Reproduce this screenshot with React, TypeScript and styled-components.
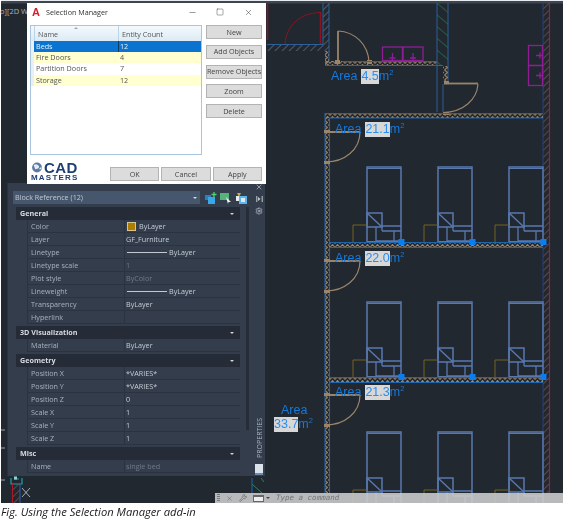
import React from "react";
import styled, { createGlobalStyle } from "styled-components";
import { Minus, Square, X, Wrench, Settings } from "lucide-react";

const Global = createGlobalStyle`
  html, body { margin: 0; padding: 0; background: #fff; }
  body { font-family: "Open Sans", "Liberation Sans", sans-serif; }
`;

const Page = styled.div`
  width: 565px;
  height: 524px;
  background: #fff;
  overflow: hidden;
`;

const Canvas = styled.div`
  position: relative;
  width: 563px;
  height: 503px;
  background: #212830;
  overflow: hidden;
`;

const Drawing = styled.svg`
  display: block;
  width: 563px;
  height: 503px;
  filter: blur(0.35px);
`;

const Caption = styled.div`
  padding: 2px 0 0 1px;
  font: italic 11.2px/14px "Open Sans", sans-serif;
  color: #1a1a1a;
  filter: blur(0.2px);
`;

const ViewLabel = styled.div`
  position: absolute;
  left: 0;
  top: 6px;
  font: 7.5px/11px "Open Sans", sans-serif;
  color: #aab2bc;
  white-space: nowrap;
`;

const Area = styled.div<{ $x: number; $y: number }>`
  position: absolute;
  left: ${p => p.$x}px;
  top: ${p => p.$y}px;
  display: flex;
  align-items: center;
  height: 15px;
  font: 12.5px/15px "Liberation Sans", Arial, sans-serif;
  color: #1679dc;
  white-space: nowrap;
  filter: blur(0.3px);
`;
const AreaWord = styled.span`
  margin-right: 4px;
`;
const AreaValue = styled.span`
  background: #d8d8d8;
  color: #2a8df2;
  line-height: 15px;
`;
const Sup = styled.span`
  font-size: 7.5px;
  line-height: 8px;
  margin-top: -7px;
`;

/* dialog */
const Dialog = styled.div`
  position: absolute;
  left: 27px;
  top: 3px;
  width: 239px;
  height: 181px;
  background: #fff;
  display: flex;
  flex-direction: column;
  box-sizing: border-box;
  padding: 0 4px 3px 3px;
  font: 7.2px/11px "Open Sans", sans-serif;
  color: #333;
  filter: blur(0.3px);
`;
const TitleBar = styled.div`
  display: flex;
  align-items: center;
  height: 22px;
  padding-bottom: 4px;
  box-sizing: border-box;
  flex: none;
`;
const AppGlyph = styled.span`
  width: 9px;
  margin-left: 2px;
  font: bold 11px/11px "Liberation Sans", sans-serif;
  color: #d8202a;
`;
const TitleText = styled.span`
  margin-left: 5px;
  flex: 1;
  font-size: 7.2px;
  color: #333;
`;
const WinButton = styled.span`
  width: 28px;
  display: flex;
  justify-content: center;
  color: #222;
`;
const DialogBody = styled.div`
  display: flex;
  gap: 4px;
  height: 130px;
  flex: none;
`;
const ListBox = styled.div`
  width: 172px;
  height: 130px;
  box-sizing: border-box;
  border: 1px solid #a9c6de;
  background: #fff;
`;
const ListHeader = styled.div`
  position: relative;
  display: grid;
  grid-template-columns: 3px 84px 1fr;
  height: 15px;
  background: linear-gradient(#f4f9fc, #dcebf5);
  &::after {
    content: "";
    position: absolute;
    left: 43px;
    top: 1px;
    border-left: 2px solid transparent;
    border-right: 2px solid transparent;
    border-bottom: 2px solid #9aa7b3;
  }
`;
const HeadCell = styled.div`
  display: flex;
  align-items: center;
  padding: 2px 0 0 3px;
  border-left: 1px solid #b8d4e8;
  color: #555;
`;
const ListRow = styled.div<{ $selected?: boolean; $alt?: boolean }>`
  display: grid;
  grid-template-columns: 3px 84px 1fr;
  height: 11.2px;
  line-height: 11px;
  color: ${p => (p.$selected ? "#e6f2fc" : "#555")};
  background: ${p => (p.$selected ? "#0a74d0" : p.$alt ? "#ffffcf" : "#fff")};
`;
const Gutter = styled.div`
  background: #e8f0f6;
`;
const Cell = styled.div<{ $selected?: boolean }>`
  padding-left: 1px;
  border-left: 1px solid ${p => (p.$selected ? "#0a3a66" : "transparent")};
`;
const Side = styled.div`
  display: flex;
  flex-direction: column;
  gap: 5.8px;
`;
const Btn = styled.div<{ $w: number }>`
  width: ${p => p.$w}px;
  height: 14px;
  box-sizing: border-box;
  display: flex;
  align-items: center;
  justify-content: center;
  background: #dcdcdc;
  border: 1px solid #b3b3b3;
  color: #444;
  white-space: nowrap;
`;
const Footer = styled.div`
  display: flex;
  align-items: flex-end;
  margin-top: auto;
  gap: 2px;
`;
const Logo = styled.div`
  width: 76px;
  margin: 0 2px 0 1px;
  display: flex;
  flex-direction: column;
  gap: 1px;
  color: #1f3f73;
`;
const LogoTop = styled.div`
  display: flex;
  align-items: center;
  gap: 1px;
  height: 11px;
`;
const LogoCad = styled.span`
  font: bold 15px/11px "Liberation Sans", sans-serif;
  letter-spacing: 0.4px;
`;
const LogoMasters = styled.span`
  font: bold 8px/7px "Liberation Sans", sans-serif;
  letter-spacing: 1.2px;
`;

/* properties palette */
const Palette = styled.div`
  position: absolute;
  left: 7px;
  top: 183px;
  width: 258px;
  height: 293px;
  display: flex;
  background: #333d4c;
  box-sizing: border-box;
  border-left: 1px solid #2a323e;
  font: 7.2px/13px "Open Sans", sans-serif;
  color: #a9b2be;
  filter: blur(0.3px);
`;
const PaletteMain = styled.div`
  flex: 1;
  padding: 8px 0 0 5px;
  min-width: 0;
`;
const SelectRow = styled.div`
  display: flex;
  align-items: center;
  height: 13px;
`;
const SelectBox = styled.div`
  width: 187px;
  height: 13px;
  display: flex;
  align-items: center;
  justify-content: space-between;
  box-sizing: border-box;
  padding: 0 2px;
  background: #46566c;
  color: #c2cad4;
  &::after {
    content: "";
    margin-right: 1px;
    border-left: 2px solid transparent;
    border-right: 2px solid transparent;
    border-top: 2px solid #d5dbe2;
  }
`;
const SelectIcons = styled.div`
  display: flex;
  gap: 3px;
  margin-left: 5px;
`;
const ScrollWrap = styled.div`
  display: flex;
  margin-top: 3px;
  margin-left: 3px;
`;
const Sections = styled.div`
  width: 224px;
  display: flex;
  flex-direction: column;
  gap: 2px;
`;
const Scroll = styled.div`
  width: 3px;
  height: 223px;
  margin-left: 6px;
  background: #262d38;
`;
const SectionHead = styled.div`
  height: 13px;
  display: flex;
  align-items: center;
  justify-content: space-between;
  padding: 0 6px 0 4px;
  background: #252c37;
  color: #d5dae0;
  font-weight: 700;
  &::after {
    content: "";
    border-left: 2.5px solid transparent;
    border-right: 2.5px solid transparent;
    border-top: 2.5px solid #cfd4da;
  }
`;
const PropRow = styled.div`
  display: grid;
  grid-template-columns: 97px 1fr;
  height: 13px;
  margin-left: 11px;
  box-sizing: border-box;
  border-bottom: 1px solid #2b3340;
  border-left: 1px solid #2b3340;
  line-height: 12px;
`;
const PropName = styled.div`
  padding-left: 3px;
  border-right: 1px solid #2b3340;
`;
const PropValue = styled.div<{ $muted?: boolean }>`
  padding-left: 1px;
  display: flex;
  align-items: center;
  color: ${p => (p.$muted ? "#6f7986" : "#c5ccd5")};
  white-space: nowrap;
`;
const Swatch = styled.span`
  width: 9px;
  height: 9px;
  box-sizing: border-box;
  margin: 0 3px 0 1px;
  background: #b07c00;
  border: 1px solid #d8c78a;
`;
const LineSample = styled.span`
  width: 40px;
  height: 1px;
  margin: 0 2px 0 1px;
  background: #c3c9d1;
`;
const SideStrip = styled.div`
  width: 12px;
  flex: none;
  display: flex;
  flex-direction: column;
  align-items: center;
  height: 100%;
  color: #c3c9d1;
  gap: 4px;
`;
const Vertical = styled.div`
  margin-top: auto;
  writing-mode: vertical-rl;
  transform: rotate(180deg);
  font-size: 7px;
  line-height: 11px;
  color: #aab2bd;
`;
const SideGlyph = styled.div`
  width: 8px;
  height: 9px;
  margin: 2px 0 1px;
  background: #dbe3ea;
  border-bottom: 2px solid #6f8aa8;
`;

/* command line */
const CommandBar = styled.div`
  position: absolute;
  left: 215px;
  top: 493px;
  width: 348px;
  height: 10px;
  display: flex;
  align-items: center;
  gap: 6px;
  background: rgba(205, 205, 205, 0.88);
  color: #555;
  filter: blur(0.3px);
`;
const Grip = styled.span`
  width: 3px;
  height: 8px;
  margin-left: 2px;
  background: repeating-linear-gradient(#777 0 1px, transparent 1px 2px);
`;
const Prompt = styled.span`
  font: italic 7.5px/10px "DejaVu Sans Mono", monospace;
  color: #777;
  margin-left: 0;
  white-space: nowrap;
`;
const TermIcon = styled.span`
  width: 11px;
  height: 7px;
  box-sizing: border-box;
  border: 1px solid #666;
  border-top-width: 2px;
  background: #eee;
`;
const Caret = styled.span`
  border-left: 2px solid transparent;
  border-right: 2px solid transparent;
  border-top: 2px solid #444;
  margin-left: -4px;
`;

const WALL = "#1f66ad";
const BED = "#5878ae";
const TAN = "#9a846a";

function Bed({ x, y }: { x: number; y: number }) {
  const b = y + 75;
  return (
    <g fill="none" stroke={BED} strokeWidth="1.5">
      <path d={`M${x} ${b}V${y}H${x + 34}V${b}`} />
      <path d={`M${x} ${y + 1.5}H${x + 34}`} strokeWidth="1.2" />
      <rect x={x} y={y + 46} width="15" height="14" />
      <path d={`M${x} ${y + 46}L${x + 15} ${y + 60}`} />
      <path d={`M${x + 9} ${y + 60}V${y + 74}H${x + 34}M${x + 15} ${y + 59}H${x + 34}M${x + 15} ${y + 64}H${x + 34}M${x + 27} ${y + 64}V${y + 74}M${x + 15} ${y + 64}V${y + 60}`} strokeWidth="1.3" />
      <path d={`M${x} ${b}H${x + 34}`} strokeWidth="1.8" />
      <path d={`M${x - 14} ${b}V${y + 58}H${x}`} stroke="#75631f" strokeWidth="1" />
    </g>
  );
}

function Door({ y }: { y: number }) {
  return (
    <g fill="none" stroke={TAN}>
      <path d={`M326 ${y}H360`} strokeWidth="1.8" />
      <path d={`M360 ${y}C360 ${y + 18} 344 ${y + 30} 326 ${y + 30}`} strokeWidth="1.2" />
      <rect x="324" y={y - 2} width="6" height="3" fill={TAN} stroke="none" />
      <rect x="324" y={y + 29} width="6" height="3" fill={TAN} stroke="none" />
    </g>
  );
}

function HWall({ x1, x2, y }: { x1: number; x2: number; y: number }) {
  return (
    <g>
      <rect x={x1} y={y} width={x2 - x1} height="4" fill="url(#zigH)" />
      <path d={`M${x1} ${y + 4.5}H${x2}`} stroke={WALL} strokeWidth="1" />
    </g>
  );
}

function VWall({ y1, y2 }: { y1: number; y2: number }) {
  return <rect x="325" y={y1} width="4" height={y2 - y1} fill="url(#zigV)" />;
}

function Sink({ x, y }: { x: number; y: number }) {
  return (
    <g fill="none" stroke="#8f1d96" strokeWidth="1.3">
      <rect x={x} y={y} width="20" height="13.5" />
      <path d={`M${x + 10} ${y + 6}V${y + 13}M${x + 7} ${y + 11}H${x + 13}`} />
    </g>
  );
}

function SinkV({ y }: { y: number }) {
  return (
    <g fill="none" stroke="#8f1d96" strokeWidth="1.3">
      <rect x="528.5" y={y} width="14" height="20" />
      <path d={`M536 ${y + 10}H542M540 ${y + 7}V${y + 13}`} />
    </g>
  );
}

function Plan() {
  return (
    <Drawing viewBox="0 0 563 503" aria-hidden="true">
      <defs>
        <pattern id="hatch" width="5" height="5" patternUnits="userSpaceOnUse" patternTransform="rotate(-45)">
          <path d="M0 0H5" stroke="#78808c" strokeWidth="1.1" />
        </pattern>
        <pattern id="hatchRed" width="5" height="5" patternUnits="userSpaceOnUse" patternTransform="rotate(-45)">
          <path d="M0 0H5" stroke="#8a5f66" strokeWidth="1.1" />
        </pattern>
        <pattern id="hatchGreen" width="9" height="9" patternUnits="userSpaceOnUse" patternTransform="rotate(40)">
          <path d="M0 0H9" stroke="#1f8a55" strokeWidth="1.1" />
        </pattern>
        <pattern id="zigH" width="5" height="4" patternUnits="userSpaceOnUse">
          <path d="M0 3.5L2.5 .5L5 3.5" fill="none" stroke={TAN} strokeWidth="1.1" />
        </pattern>
        <pattern id="zigV" width="4" height="5" patternUnits="userSpaceOnUse">
          <path d="M.5 0L3.5 2.5L.5 5" fill="none" stroke={TAN} strokeWidth="1.1" />
        </pattern>
      </defs>
      <rect width="563" height="503" fill="#212830" />
      <rect width="563" height="1" fill="#e9ebee" />
      <rect y="1" width="563" height="2.5" fill="#3c4653" />
      <rect y="0" width="1" height="503" fill="#fff" />

      {/* upper left room */}
      <rect x="323" y="3" width="6" height="42" fill="url(#hatch)" />
      <path d="M323 3V44M329 3V52" stroke="#2c5f9c" />
      <rect x="267" y="45" width="62" height="6" fill="url(#hatch)" />
      <path d="M267 44.5H323" stroke="#2c5f9c" />
      <path d="M285 44C286 26 300 13 320 12.5" fill="none" stroke="#8a1420" strokeWidth="1" />
      <path d="M320.5 12V44" stroke="#8a1420" strokeWidth="1.6" />
      <path d="M267.5 4V40" stroke="#8a1420" strokeWidth="1.5" />

      {/* small room */}
      <path d="M338 31V62" stroke={TAN} strokeWidth="1.8" />
      <path d="M338 31C355 32 368 44 369 62" fill="none" stroke={TAN} strokeWidth="1.2" />
      <rect x="335" y="60" width="5" height="4" fill={TAN} />
      <rect x="367" y="60" width="5" height="4" fill={TAN} />
      <rect x="325" y="61" width="112" height="4" fill="url(#zigH)" />
      <path d="M325 65.5H443M329 51V61M342 61.5H437" stroke={WALL} />
      <VWall y1={51} y2={65} />
      <Sink x={382.5} y={47} />
      <Sink x={403} y={47} />

      {/* green wall */}
      <rect x="437" y="3" width="11" height="62" fill="url(#hatchGreen)" />
      <path d="M437 3V112M448 3V84M443 84V112" stroke="#2c5f9c" />
      <rect x="443" y="66" width="5" height="16" fill="url(#zigV)" />
      <path d="M449 83.5H478" stroke={TAN} strokeWidth="1.8" />
      <path d="M478 84C477 99 464 112 443 112.5" fill="none" stroke={TAN} strokeWidth="1.2" />
      <rect x="444" y="81" width="5" height="3.5" fill={TAN} />
      <rect x="443" y="112" width="6" height="3" fill={TAN} />

      {/* right wall */}
      <rect x="543" y="3" width="6" height="490" fill="url(#hatchRed)" />
      <path d="M543 3V493" stroke="#2a3f78" />
      <path d="M549.5 3V493" stroke="#a81c28" strokeWidth="1.2" />
      <SinkV y={45.5} />
      <SinkV y={65.5} />

      {/* corridors */}
      <rect x="325" y="114" width="218" height="4" fill="url(#zigH)" />
      <path d="M325 113.5H543M329 118H543" stroke={WALL} />
      <VWall y1={118} y2={493} />
      <path d="M325 113V493M329.5 118V493" stroke={WALL} strokeWidth="1.1" />

      <Door y={132} />
      <Door y={261} />
      <Door y={395} />

      {[167, 302, 432].map(y =>
        [367, 438, 509].map(x => <Bed key={`${x}-${y}`} x={x} y={y} />)
      )}

      <HWall x1={329} x2={543} y={243} />
      <HWall x1={329} x2={543} y={378} />
      <path d="M329 242.5H543M329 377.5H543" stroke={WALL} />

      {[242, 377].map(y =>
        [401, 472, 543].map(x => (
          <rect key={`${x}-${y}`} x={x - 2.5} y={y - 3} width="6" height="6" fill="#0a7df0" />
        ))
      )}

      {/* lower left */}
      <path d="M11 478V484H22V478M14 479H19" fill="none" stroke="#1aa3a8" strokeWidth="1.2" />
      <rect x="14" y="476.5" width="3" height="3" fill="#8fd3d6" />
      <rect x="12" y="484" width="8" height="20" fill="url(#hatchRed)" />
      <path d="M12.5 484V503" stroke="#a81c28" />
      <path d="M20 484V503" stroke="#2a5fb0" />
      <path d="M22 488L30 497M30 488L22 497" stroke="#c9ced4" strokeWidth="0.8" />
      <path d="M1 430H5M1 448H5M1 480H5" stroke="#9aa2ab" />
      <path d="M252 478V493" stroke="#2a5fb0" />
      <path d="M252 484L262 493M261 478L264 482" stroke="#1f8a55" />
    </Drawing>
  );
}

type Prop = { name: string; value?: string; muted?: boolean; kind?: "swatch" | "line" };
const sections: { title: string; rows: Prop[] }[] = [
  {
    title: "General",
    rows: [
      { name: "Color", value: "ByLayer", kind: "swatch" },
      { name: "Layer", value: "GF_Furniture" },
      { name: "Linetype", value: "ByLayer", kind: "line" },
      { name: "Linetype scale", value: "1", muted: true },
      { name: "Plot style", value: "ByColor", muted: true },
      { name: "Lineweight", value: "ByLayer", kind: "line" },
      { name: "Transparency", value: "ByLayer" },
      { name: "Hyperlink" },
    ],
  },
  { title: "3D Visualization", rows: [{ name: "Material", value: "ByLayer" }] },
  {
    title: "Geometry",
    rows: [
      { name: "Position X", value: "*VARIES*" },
      { name: "Position Y", value: "*VARIES*" },
      { name: "Position Z", value: "0" },
      { name: "Scale X", value: "1" },
      { name: "Scale Y", value: "1" },
      { name: "Scale Z", value: "1" },
    ],
  },
  { title: "Misc", rows: [{ name: "Name", value: "single bed", muted: true }] },
];

const listRows = [
  { name: "Beds", count: "12", selected: true },
  { name: "Fire Doors", count: "4", alt: true },
  { name: "Partition Doors", count: "7" },
  { name: "Storage", count: "12", alt: true },
];

const areas = [
  { x: 331, y: 69, value: "4.5" },
  { x: 335, y: 122, value: "21.1" },
  { x: 335, y: 251, value: "22.0" },
  { x: 335, y: 385, value: "21.3" },
];

const TwoBoxes = ({ a, b }: { a: string; b: string }) => (
  <svg width="12" height="12" viewBox="0 0 12 12">
    <rect x="0" y="3" width="6" height="5" fill={b} />
    <rect x="3" y="5" width="7" height="7" fill={a} />
    <path d="M9 0V5M6.5 2.5H11.5" stroke="#4fd26a" strokeWidth="1.3" />
  </svg>
);

const QuickIcon = () => (
  <svg width="12" height="12" viewBox="0 0 12 12">
    <rect x="0" y="1" width="9" height="7" fill="#55b27a" />
    <path d="M6 5L11 10L8.5 10L8 12Z" fill="#eef2f5" />
  </svg>
);

const FilterIcon = () => (
  <svg width="12" height="12" viewBox="0 0 12 12">
    <rect x="4" y="4" width="8" height="8" fill="#5fb3e8" />
    <rect x="1" y="4" width="3" height="5" fill="#e8edf1" />
    <path d="M2 1H6L4.5 4H3.5Z" fill="#d9a63a" />
    <rect x="6" y="6" width="4" height="4" fill="#dbeaf4" />
  </svg>
);

const AutoHideIcon = () => (
  <svg width="7" height="8" viewBox="0 0 7 8">
    <path d="M.8 1V7M6.2 1V7" stroke="currentColor" />
    <path d="M2 2V6L4.5 4Z" fill="currentColor" />
  </svg>
);

export default function App() {
  return (
    <Page>
      <Global />
      <Canvas>
        <Plan />
        <ViewLabel>o][2D W</ViewLabel>

        {areas.map(a => (
          <Area key={a.value} $x={a.x} $y={a.y}>
            <AreaWord>Area</AreaWord>
            <AreaValue>{a.value}</AreaValue>m<Sup>2</Sup>
          </Area>
        ))}
        <Area $x={281} $y={403}>Area</Area>
        <Area $x={274} $y={417}>
          <AreaValue>33.7</AreaValue>m<Sup>2</Sup>
        </Area>

        <Palette>
          <PaletteMain>
            <SelectRow>
              <SelectBox>Block Reference (12)</SelectBox>
              <SelectIcons>
                <TwoBoxes a="#39a7e8" b="#2a7fc0" />
                <QuickIcon />
                <FilterIcon />
              </SelectIcons>
            </SelectRow>
            <ScrollWrap>
              <Sections>
                {sections.map(s => (
                  <div key={s.title}>
                    <SectionHead>{s.title}</SectionHead>
                    {s.rows.map(r => (
                      <PropRow key={r.name}>
                        <PropName>{r.name}</PropName>
                        <PropValue $muted={r.muted}>
                          {r.kind === "swatch" && <Swatch />}
                          {r.kind === "line" && <LineSample />}
                          {r.value}
                        </PropValue>
                      </PropRow>
                    ))}
                  </div>
                ))}
              </Sections>
              <Scroll />
            </ScrollWrap>
          </PaletteMain>
          <SideStrip>
            <X size={8} strokeWidth={2} />
            <AutoHideIcon />
            <Settings size={8} />
            <Vertical>PROPERTIES</Vertical>
            <SideGlyph />
          </SideStrip>
        </Palette>

        <Dialog>
          <TitleBar>
            <AppGlyph>A</AppGlyph>
            <TitleText>Selection Manager</TitleText>
            <WinButton><Minus size={9} strokeWidth={1.2} /></WinButton>
            <WinButton><Square size={8} strokeWidth={1.2} /></WinButton>
            <WinButton><X size={9} strokeWidth={1.2} /></WinButton>
          </TitleBar>
          <DialogBody>
            <ListBox>
              <ListHeader>
                <div />
                <HeadCell>Name</HeadCell>
                <HeadCell>Entity Count</HeadCell>
              </ListHeader>
              {listRows.map(r => (
                <ListRow key={r.name} $selected={r.selected} $alt={r.alt}>
                  <Gutter />
                  <Cell>{r.name}</Cell>
                  <Cell $selected={r.selected}>{r.count}</Cell>
                </ListRow>
              ))}
            </ListBox>
            <Side>
              {["New", "Add Objects", "Remove Objects", "Zoom", "Delete"].map(b => (
                <Btn key={b} $w={56}>{b}</Btn>
              ))}
            </Side>
          </DialogBody>
          <Footer>
            <Logo>
              <LogoTop>
                <svg width="12" height="11" viewBox="0 0 14 12">
                  <circle cx="7" cy="6" r="5.7" fill="#5c7aa3" />
                  <path d="M3 3Q7 1 9 4T5 8ZM9 8L12 5V8Z" fill="#e6ecf3" />
                </svg>
                <LogoCad>CAD</LogoCad>
              </LogoTop>
              <LogoMasters>MASTERS</LogoMasters>
            </Logo>
            <Btn $w={50}>OK</Btn>
            <Btn $w={50}>Cancel</Btn>
            <Btn $w={50}>Apply</Btn>
          </Footer>
        </Dialog>

        <CommandBar>
          <Grip />
          <X size={7} strokeWidth={1.5} />
          <Wrench size={8} strokeWidth={1.5} />
          <TermIcon />
          <Caret />
          <Prompt>Type a command</Prompt>
        </CommandBar>
      </Canvas>
      <Caption>Fig. Using the Selection Manager add-in</Caption>
    </Page>
  );
}
